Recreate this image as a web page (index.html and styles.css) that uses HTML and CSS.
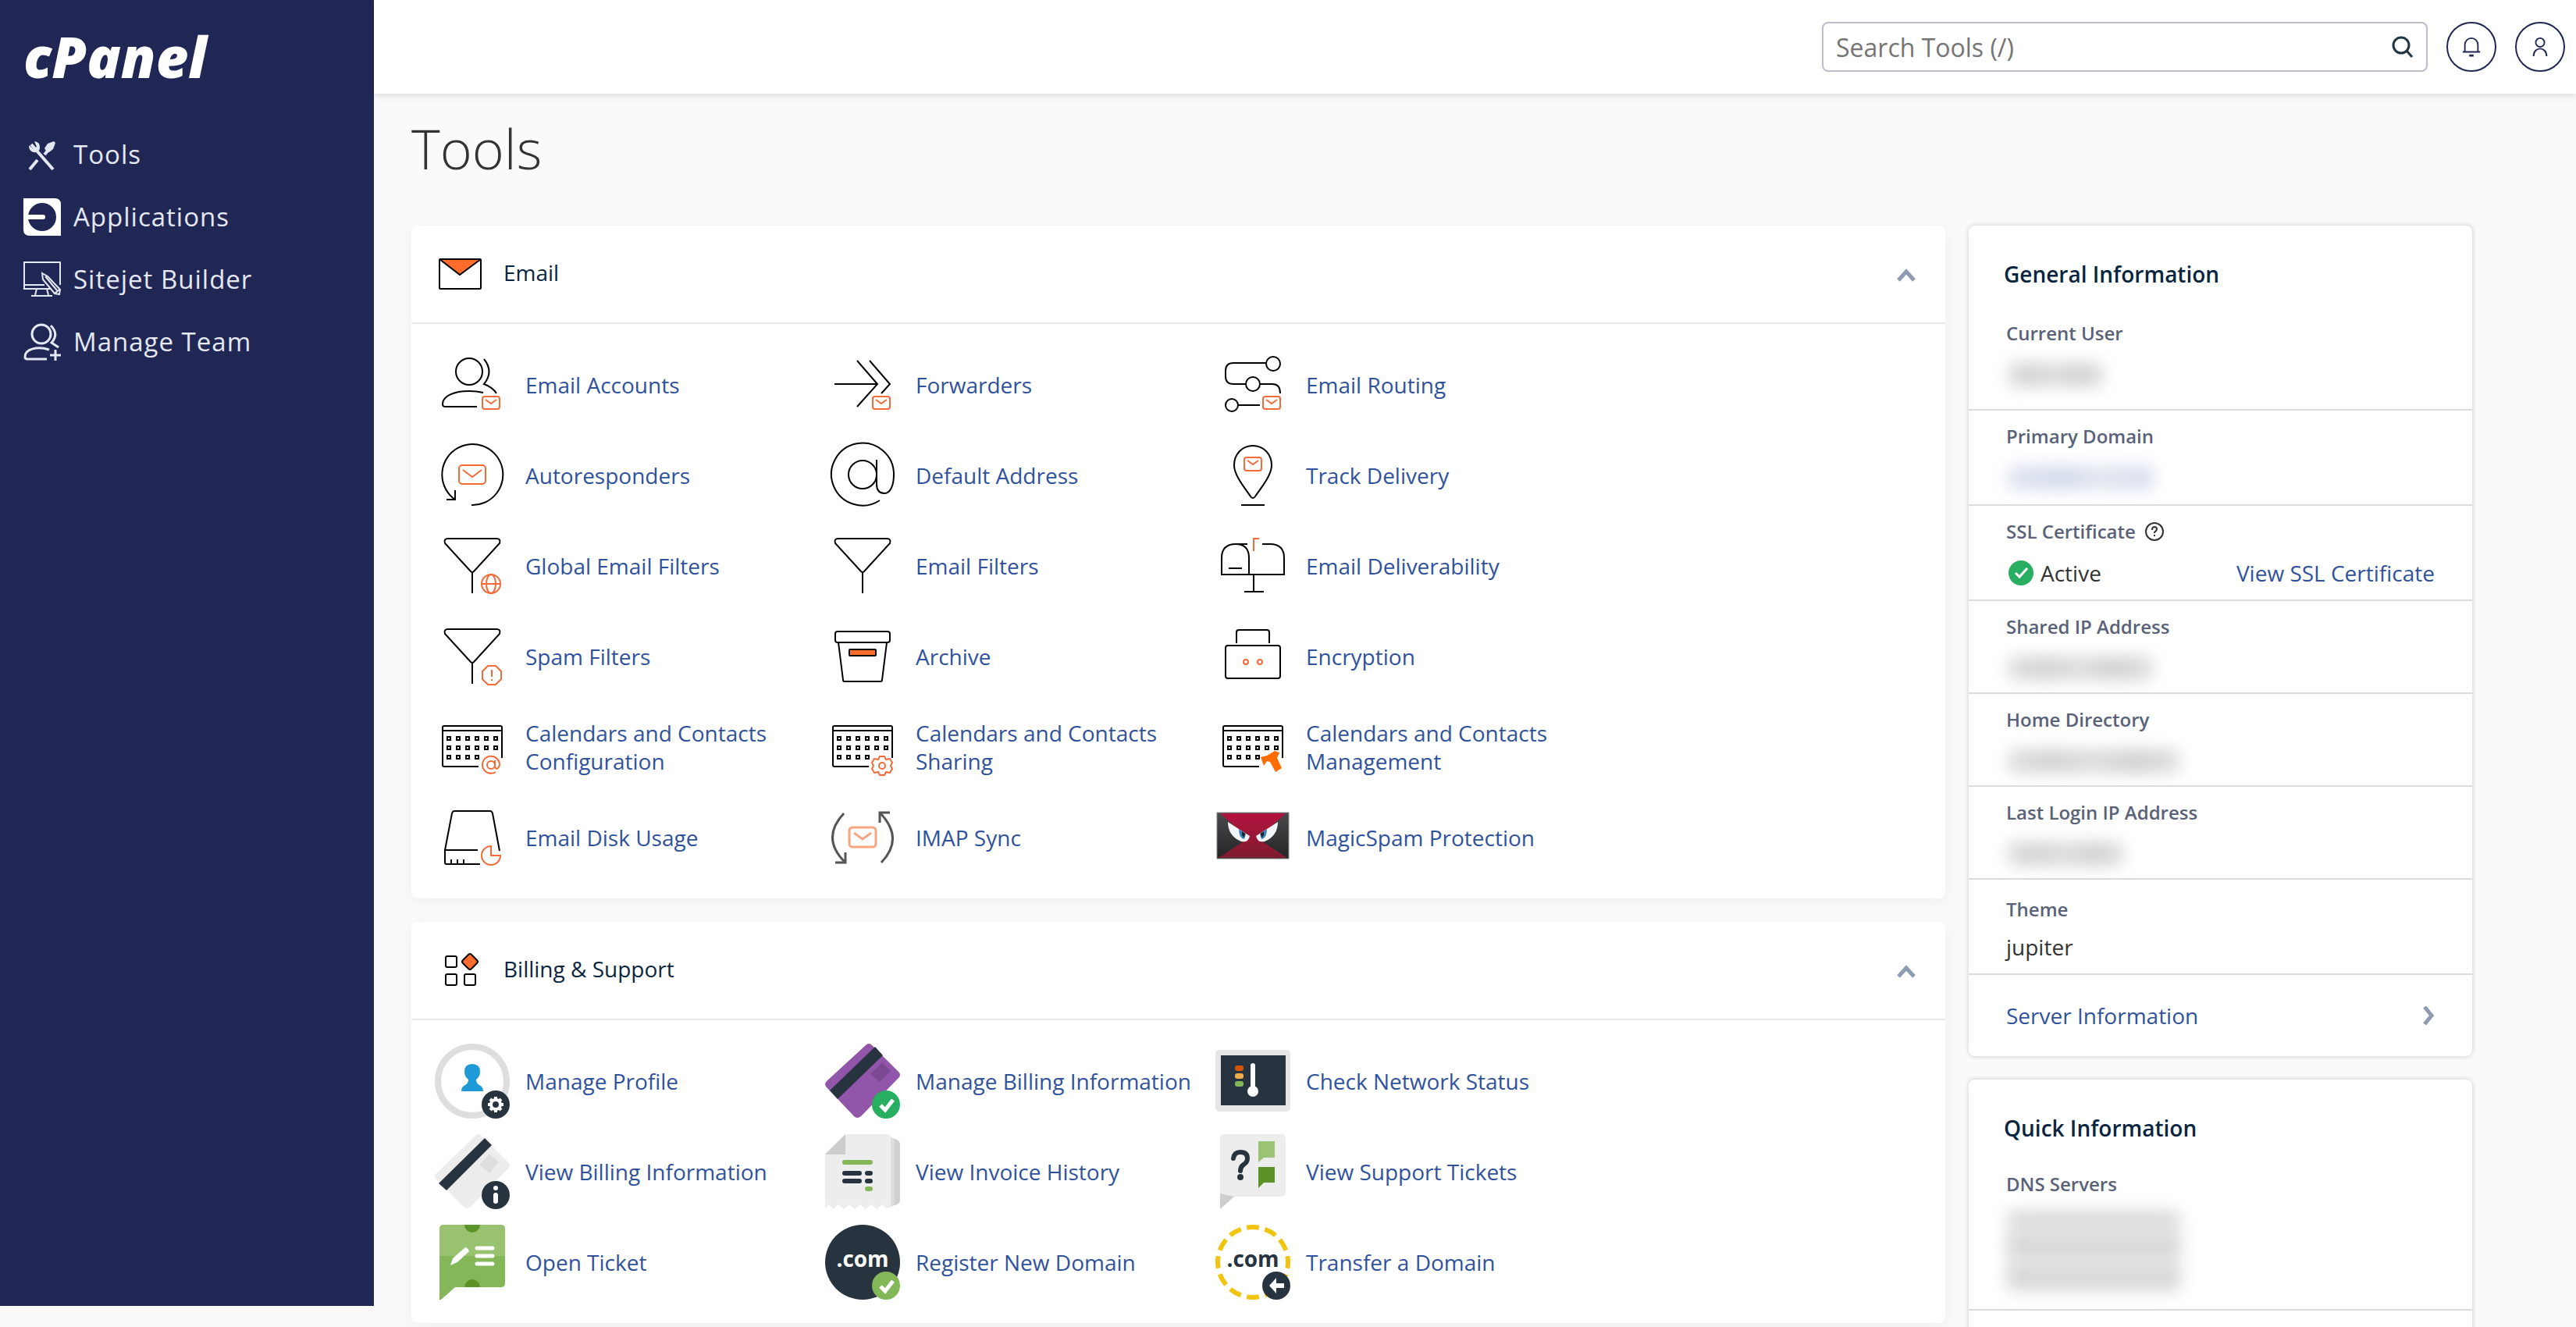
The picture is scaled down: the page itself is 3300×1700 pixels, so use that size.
FILE: index.html
```html
<!DOCTYPE html>
<html lang="en">
<head>
  <meta charset="UTF-8">
  <meta name="viewport" content="width=device-width, initial-scale=1.0">
  <title>cPanel - Tools</title>
  <link rel="stylesheet" href="styles.css">
</head>
<body>
  <!-- shared icon parts -->
  <svg class="defs" aria-hidden="true">
    <defs>
      <g id="mail-badge" class="accent">
        <rect x="61" y="63" width="22" height="16" rx="3"/>
        <path d="M65 67l7 5 7-5"/>
      </g>
      <g id="funnel" class="line">
        <path d="M17 13H79q6 0 4 6L50 55q-2 2-4 0L13 19q-2-6 4-6ZM48 57V83"/>
      </g>
      <g id="calendar" class="line">
        <path d="M56 73H12q-2 0-2-2V23q0-2 2-2H84q2 0 2 2V62M10 27H86"/>
        <path d="M16 35h4v4h-4zM28 35h4v4h-4zM40 35h4v4h-4zM52 35h4v4h-4zM64 35h4v4h-4zM76 35h4v4h-4zM16 47h4v4h-4zM28 47h4v4h-4zM40 47h4v4h-4zM52 47h4v4h-4zM64 47h4v4h-4zM76 47h4v4h-4zM16 59h4v4h-4zM28 59h4v4h-4zM40 59h4v4h-4zM52 59h4v4h-4z"/>
      </g>
      <path id="check" d="M71 79l6 6 10-13" fill="none" stroke="#fff" stroke-width="5"/>
    </defs>
  </svg>

  <div class="page">
    <nav class="sidebar">
      <a class="logo" href="#">cPanel</a>
      <a class="nav-link" href="#">
        <svg viewBox="0 0 48 48">
          <path d="M10 11L38 43M8 43L18 31M27 24L33 17" fill="none" stroke="#e4e8f2" stroke-width="4"/>
          <path d="M7 12l6 5 4-3-3-7q8 1 7 9-1 6-8 5-6-1-6-9ZM30 21l-3-5 4-6 8-3 2 2-3 8-5 4Z" fill="#e4e8f2"/>
        </svg>
        Tools
      </a>
      <a class="nav-link" href="#">
        <svg viewBox="0 0 48 48">
          <path d="M0 0H40q8 0 8 8V48H8q-8 0-8-8Z" fill="#fff"/>
          <circle cx="24" cy="24" r="18" fill="#212754"/>
          <path d="M5 24H25" stroke="#fff" stroke-width="6" stroke-linecap="round"/>
        </svg>
        Applications
      </a>
      <a class="nav-link" href="#">
        <svg viewBox="0 0 48 48" fill="none" stroke="#e4e8f2" stroke-width="2">
          <path d="M47 31V2H1V36H35M1 31H27M17 36l-2 8M30 36l2 8M10 45H37"/>
          <path d="M24 16l1 8 15 18 6 1 1-6-16-17ZM28 20L43 38M40 42l6-5"/>
        </svg>
        Sitejet Builder
      </a>
      <a class="nav-link" href="#">
        <svg viewBox="0 0 48 48" fill="none" stroke="#e4e8f2" stroke-width="3">
          <circle cx="23" cy="14" r="12"/>
          <path d="M35 3q11 11 1 22l9 6M33 34C18 29 2 33 2 43q0 3 3 3H30M41 34V48M34 41H48"/>
        </svg>
        Manage Team
      </a>
    </nav>

    <div class="main">
      <header class="topbar">
        <div class="search">
          <input type="search" id="search" placeholder="Search Tools (/)" aria-label="Search Tools">
          <button class="search-btn" aria-label="Search">
            <svg viewBox="0 0 28 28" fill="none" stroke="#233543" stroke-width="3"><circle cx="12" cy="12" r="10"/><path d="M19 19l7 8"/></svg>
          </button>
        </div>
        <button class="round-btn" aria-label="Notifications">
          <svg viewBox="0 0 28 28" fill="none" stroke="#212754" stroke-width="2"><path d="M5 21V11a9 9 0 0 1 18 0V21M2 21H26" /><path d="M11 26h6" stroke-width="3"/></svg>
        </button>
        <button class="round-btn" aria-label="Account">
          <svg viewBox="0 0 28 28" fill="none" stroke="#212754" stroke-width="2"><circle cx="14" cy="8" r="6"/><path d="M5 27c0-14 18-14 18 0"/></svg>
        </button>
      </header>

      <h1>Tools</h1>

      <div class="columns">
        <div class="tools">
          <section class="card">
            <div class="card-header">
              <svg class="head-icon" viewBox="0 0 64 48">
                <path d="M6 5H58L32 25Z" fill="#ff6c2c"/>
                <rect x="6" y="5" width="53" height="38" rx="1" fill="none" stroke="#000" stroke-width="2"/>
                <path d="M6 5L32 25 59 5" fill="none" stroke="#000" stroke-width="2"/>
              </svg>
              <h2>Email</h2>
              <button class="collapse" aria-label="Collapse Email"><svg viewBox="0 0 24 24"><path d="M2 18l10-11 10 11"/></svg></button>
            </div>
            <div class="card-body">
              <a class="tool" href="#">
                <svg viewBox="0 0 96 96">
                  <g class="line"><circle cx="44" cy="31" r="17"/><path d="M63 15Q76 31 63 47q11 4 16 12M62 58q-8-2-18-2C25 56 10 62 10 73q0 3 4 3H54"/></g>
                  <use href="#mail-badge"/>
                </svg>
                <span>Email Accounts</span>
              </a>
              <a class="tool" href="#">
                <svg viewBox="0 0 96 96">
                  <path class="line" d="M12 47H67M41 17L67 47 41 76M57 17L83 47 72 59"/>
                  <use href="#mail-badge"/>
                </svg>
                <span>Forwarders</span>
              </a>
              <a class="tool" href="#">
                <svg viewBox="0 0 96 96">
                  <g class="line"><circle cx="74" cy="21" r="9"/><circle cx="48" cy="47" r="9"/><circle cx="21" cy="74" r="8"/><path d="M65 20H23q-10 0-10 10v7q0 10 10 10H39M57 47H73q10 0 10 12M29 74H57"/></g>
                  <use href="#mail-badge"/>
                </svg>
                <span>Email Routing</span>
              </a>
              <a class="tool" href="#">
                <svg viewBox="0 0 96 96">
                  <path class="line" d="M47 86A39 39 0 1 0 26 79M26 67V79H15"/>
                  <g class="accent"><rect x="31" y="35" width="34" height="24" rx="4"/><path d="M36 41l12 9 12-9"/></g>
                </svg>
                <span>Autoresponders</span>
              </a>
              <a class="tool" href="#">
                <svg viewBox="0 0 96 96">
                  <g class="line"><circle cx="48" cy="47" r="18"/><path d="M66 28V59q0 12 10 12C84 71 88 60 88 47A40 40 0 1 0 70 80"/></g>
                </svg>
                <span>Default Address</span>
              </a>
              <a class="tool" href="#">
                <svg viewBox="0 0 96 96">
                  <path class="line" d="M48 10C34 10 24 21 24 35C24 49 40 67 45 75q3 4 6 0C56 67 72 49 72 35C72 21 62 10 48 10ZM33 86H63"/>
                  <g class="accent"><rect x="37" y="25" width="22" height="17" rx="3"/><path d="M41 29l7 5 7-5"/></g>
                </svg>
                <span>Track Delivery</span>
              </a>
              <a class="tool" href="#">
                <svg viewBox="0 0 96 96">
                  <use href="#funnel"/>
                  <g class="accent"><circle cx="72" cy="71" r="12"/><ellipse cx="72" cy="71" rx="6" ry="12"/><path d="M60 71H84"/></g>
                </svg>
                <span>Global Email Filters</span>
              </a>
              <a class="tool" href="#">
                <svg viewBox="0 0 96 96"><use href="#funnel"/></svg>
                <span>Email Filters</span>
              </a>
              <a class="tool" href="#">
                <svg viewBox="0 0 96 96">
                  <path class="line" d="M41 20H26Q8 20 8 38V59H88V38Q88 20 70 20H60M26 20Q43 20 43 38V59M49 59V81M37 81H62M17 51H34"/>
                  <path class="accent" d="M49 29V13H56"/>
                </svg>
                <span>Email Deliverability</span>
              </a>
              <a class="tool" href="#">
                <svg viewBox="0 0 96 96">
                  <use href="#funnel"/>
                  <path class="accent" d="M68 60H78L85 67V77L78 84H68L61 77V67ZM73 65V74M73 77V79"/>
                </svg>
                <span>Spam Filters</span>
              </a>
              <a class="tool" href="#">
                <svg viewBox="0 0 96 96">
                  <g class="line"><rect x="13" y="16" width="70" height="14" rx="3"/><path d="M17 30L23 78q0 2 2 2H71q2 0 2-2L79 30"/><rect x="31" y="39" width="34" height="8" rx="1" class="filled"/></g>
                </svg>
                <span>Archive</span>
              </a>
              <a class="tool" href="#">
                <svg viewBox="0 0 96 96">
                  <g class="line"><rect x="13" y="34" width="70" height="42" rx="3"/><path d="M27 31V17q0-3 3-3H66q3 0 3 3V31"/></g>
                  <g class="accent"><circle cx="39" cy="55" r="3"/><circle cx="57" cy="55" r="3"/></g>
                </svg>
                <span>Encryption</span>
              </a>
              <a class="tool" href="#">
                <svg viewBox="0 0 96 96">
                  <use href="#calendar"/>
                  <g class="accent"><circle cx="72" cy="71" r="5"/><path d="M77 65V73q1 4 4 2 2-2 2-5A11 11 0 1 0 78 80"/></g>
                </svg>
                <span>Calendars and Contacts Configuration</span>
              </a>
              <a class="tool" href="#">
                <svg viewBox="0 0 96 96">
                  <use href="#calendar"/>
                  <g class="accent"><circle cx="73" cy="72" r="4"/><path d="M70 60h6l2 4 5-1 3 5-2 4 2 4-3 5-5-1-2 4h-6l-2-4-5 1-3-5 2-4-2-4 3-5 5 1Z"/></g>
                </svg>
                <span>Calendars and Contacts Sharing</span>
              </a>
              <a class="tool" href="#">
                <svg viewBox="0 0 96 96">
                  <use href="#calendar"/>
                  <path d="M58 61L66 59 76 53 82 55 79 62 85 75 77 80 70 67 66 66 62 72Z" fill="#ff6c00"/>
                </svg>
                <span>Calendars and Contacts Management</span>
              </a>
              <a class="tool" href="#">
                <svg viewBox="0 0 96 96">
                  <path class="line" d="M55 64H13V80q0 2 2 2H58M13 64L22 17q1-3 3-3H71q2 0 3 3L83 65M21 76V82M29 76V82M37 76V82"/>
                  <path class="accent" d="M72 59A12 12 0 1 0 84 71H72Z"/>
                </svg>
                <span>Email Disk Usage</span>
              </a>
              <a class="tool" href="#">
                <svg viewBox="0 0 96 96">
                  <path d="M24 17Q-6 49 26 80M26 67V80H13M72 80Q102 49 70 16M70 29V16H83" fill="none" stroke="#555" stroke-width="3"/>
                  <g fill="none" stroke="#f9a582" stroke-width="3"><rect x="31" y="35" width="34" height="25" rx="4"/><path d="M37 42l11 8 11-8"/></g>
                </svg>
                <span>IMAP Sync</span>
              </a>
              <a class="tool" href="#">
                <svg viewBox="0 0 96 96">
                  <defs>
                    <linearGradient id="mask" x1="0" y1="0" x2="0" y2="1"><stop offset="0" stop-color="#b5123f"/><stop offset="1" stop-color="#7d1c2e"/></linearGradient>
                    <linearGradient id="hood" x1="0" y1="0" x2="0" y2="1"><stop offset="0" stop-color="#4a4a4c"/><stop offset="1" stop-color="#242426"/></linearGradient>
                  </defs>
                  <rect x="2" y="16" width="92" height="59" fill="url(#hood)" stroke="#888"/>
                  <path d="M6 17H90L54 49 92 74H4L42 49Z" fill="url(#mask)"/>
                  <path d="M16 28L44 46Q42 55 33 53Q16 46 16 28ZM80 28L52 46Q54 55 63 53Q80 46 80 28Z" fill="#f2f5f7"/>
                  <path d="M30 37l9 6-2 7q-7-1-7-13ZM66 37l-9 6 2 7q7-1 7-13Z" fill="#3b82b8"/>
                  <path d="M34 40l4 3-1 5-3-3ZM62 40l-4 3 1 5 3-3Z" fill="#14212e"/>
                </svg>
                <span>MagicSpam Protection</span>
              </a>
            </div>
          </section>

          <section class="card">
            <div class="card-header">
              <svg class="head-icon" viewBox="0 0 64 48" fill="none" stroke="#000" stroke-width="2">
                <rect x="14" y="6" width="14" height="14" rx="2"/>
                <rect x="14" y="29" width="14" height="14" rx="2"/>
                <rect x="38" y="29" width="14" height="14" rx="2"/>
                <path d="M43 4q2-2 4 0l7 7q2 2 0 4l-7 7q-2 2-4 0l-7-7q-2-2 0-4Z" fill="#ff6c2c"/>
              </svg>
              <h2>Billing &amp; Support</h2>
              <button class="collapse" aria-label="Collapse Billing &amp; Support"><svg viewBox="0 0 24 24"><path d="M2 18l10-11 10 11"/></svg></button>
            </div>
            <div class="card-body">
              <a class="tool" href="#">
                <svg viewBox="0 0 96 96">
                  <circle cx="48" cy="48" r="44" fill="#fff" stroke="#dedede" stroke-width="8"/>
                  <path d="M48 26q10 0 10 10 0 6-5 10 0 5 4 7 5 2 5 8H34q0-6 5-8 4-2 4-7-5-4-5-10 0-10 10-10Z" fill="#1e9ad6"/>
                  <circle cx="78" cy="78" r="18" fill="#27333f"/>
                  <circle cx="78" cy="78" r="6" fill="none" stroke="#fff" stroke-width="4"/>
                  <path d="M78 68V72M78 84V88M68 78H72M84 78H88M71 71l3 3M82 82l3 3M71 85l3-3M82 74l3-3" stroke="#fff" stroke-width="4"/>
                </svg>
                <span>Manage Profile</span>
              </a>
              <a class="tool" href="#">
                <svg viewBox="0 0 96 96">
                  <path d="M52 2q4-4 8 0L94 36q4 4 0 8L46 93q-5 4-9 0L2 56q-4-4 0-8Z" fill="#9155a9"/>
                  <path d="M64 4L74 15 16 71 6 60Z" fill="#27333f"/>
                  <path d="M73 24L84 35 70 49 58 39Z" fill="#7b4892"/>
                  <circle cx="78" cy="78" r="18" fill="#27ae60"/>
                  <use href="#check"/>
                </svg>
                <span>Manage Billing Information</span>
              </a>
              <a class="tool" href="#">
                <svg viewBox="0 0 96 96">
                  <rect x="0" y="8" width="96" height="79" rx="5" fill="#e6e6e6"/>
                  <rect x="7" y="15" width="83" height="64" fill="#27333f"/>
                  <rect x="25" y="28" width="11" height="7" rx="3" fill="#d35400"/>
                  <rect x="25" y="38" width="11" height="7" rx="3" fill="#f0ad4e"/>
                  <rect x="25" y="48" width="11" height="7" rx="3" fill="#84b758"/>
                  <path d="M48 28V58" stroke="#fff" stroke-width="6" stroke-linecap="round"/>
                  <circle cx="48" cy="61" r="7" fill="#fff"/>
                </svg>
                <span>Check Network Status</span>
              </a>
              <a class="tool" href="#">
                <svg viewBox="0 0 96 96">
                  <path d="M52 2q4-4 8 0L94 36q4 4 0 8L46 93q-5 4-9 0L2 58q-4-4 0-8Z" fill="#ededed"/>
                  <path d="M64 5L73 14 15 72 5 63Z" fill="#27333f"/>
                  <path d="M70 25L82 36 70 50 57 39Z" fill="#dedede"/>
                  <circle cx="78" cy="78" r="18" fill="#27333f"/>
                  <path d="M78 78V86" stroke="#fff" stroke-width="6" stroke-linecap="round"/>
                  <circle cx="78" cy="69" r="3" fill="#fff"/>
                </svg>
                <span>View Billing Information</span>
              </a>
              <a class="tool" href="#">
                <svg viewBox="0 0 96 96">
                  <path d="M80 5q16 0 16 8V84q0 8-16 8Z" fill="#d0d0d0"/>
                  <path d="M80 3q9 0 9 8V86q0 7-9 8Z" fill="#dedede"/>
                  <path d="M26 0H80q4 0 4 4V93l-6 2-5-5-7 6-7-6-7 6-7-6-7 6-7-6-7 6-7-6-7 6-5-6-5 5-2-1V26Z" fill="#ededed"/>
                  <path d="M26 0V26H0Z" fill="#cdcdcd"/>
                  <path d="M25 36H58M54 70h4" stroke="#84b758" stroke-width="6" stroke-linecap="round"/>
                  <path d="M25 50H44M25 60H44M54 50h4M54 60h4" stroke="#27333f" stroke-width="6" stroke-linecap="round"/>
                </svg>
                <span>View Invoice History</span>
              </a>
              <a class="tool" href="#">
                <svg viewBox="0 0 96 96">
                  <rect x="6" y="0" width="84" height="80" rx="5" fill="#ededed"/>
                  <path d="M6 76V96L24 80Z" fill="#cdcdcd"/>
                  <path d="M23 31q1-8 9-8 9 0 9 8 0 5-5 8-4 3-4 8" fill="none" stroke="#27333f" stroke-width="6" stroke-linecap="round"/>
                  <circle cx="32" cy="55" r="4" fill="#27333f"/>
                  <path d="M55 9H76V30H62L55 36Z" fill="#9ac373"/>
                  <path d="M55 42H76V62H62L55 69Z" fill="#5b9328"/>
                </svg>
                <span>View Support Tickets</span>
              </a>
              <a class="tool" href="#">
                <svg viewBox="0 0 96 96">
                  <path d="M6 40H90V75q0 5-5 5H26L8 96H6Z" fill="#84b758"/>
                  <path d="M6 40V5q0-5 5-5H85q5 0 5 5V40Z" fill="#98c270"/>
                  <path d="M38 0a10 10 0 0 0 20 0ZM38 80a10 10 0 0 1 20 0Z" fill="#5b9328"/>
                  <path d="M20 52l3-9 16-14q4 1 5 5L29 48Z" fill="#fff"/>
                  <path d="M54 30H74M54 40H74M54 50H74" stroke="#fff" stroke-width="5" stroke-linecap="round"/>
                </svg>
                <span>Open Ticket</span>
              </a>
              <a class="tool" href="#">
                <svg viewBox="0 0 96 96">
                  <circle cx="48" cy="48" r="48" fill="#27333f"/>
                  <text x="48" y="54" class="tld" fill="#fff">.com</text>
                  <circle cx="78" cy="78" r="18" fill="#84b758"/>
                  <use href="#check"/>
                </svg>
                <span>Register New Domain</span>
              </a>
              <a class="tool" href="#">
                <svg viewBox="0 0 96 96">
                  <circle cx="48" cy="48" r="45" fill="none" stroke="#f1c40f" stroke-width="6" pathLength="288" stroke-dasharray="16 8" stroke-dashoffset="8"/>
                  <text x="48" y="54" class="tld" fill="#27333f">.com</text>
                  <circle cx="78" cy="78" r="18" fill="#27333f"/>
                  <path d="M69 78l9-10v7h10v6H78v7Z" fill="#fff"/>
                </svg>
                <span>Transfer a Domain</span>
              </a>
            </div>
          </section>
        </div>

        <aside class="side">
          <section class="info">
            <h3>General Information</h3>
            <div class="info-row first">
              <div class="label">Current User</div>
              <div class="value"><span class="redacted w-sm"></span></div>
            </div>
            <div class="info-row">
              <div class="label">Primary Domain</div>
              <div class="value"><span class="redacted blue w-lg"></span></div>
            </div>
            <div class="info-row">
              <div class="label">SSL Certificate
                <svg class="help" viewBox="0 0 24 24" fill="none" stroke="#333" stroke-width="2"><circle cx="12" cy="12" r="11"/><path d="M9 10q0-4 3-4 3 0 3 3 0 1-3 4v1M12 16v2"/></svg>
              </div>
              <div class="value">
                <svg class="ok" viewBox="0 0 32 32"><circle cx="16" cy="16" r="16" fill="#27ae60"/><path d="M9 16l5 5 10-11" fill="none" stroke="#fff" stroke-width="3"/></svg>
                Active
                <a class="push" href="#">View SSL Certificate</a>
              </div>
            </div>
            <div class="info-row compact">
              <div class="label">Shared IP Address</div>
              <div class="value"><span class="redacted w-lg"></span></div>
            </div>
            <div class="info-row compact">
              <div class="label">Home Directory</div>
              <div class="value"><span class="redacted w-xl"></span></div>
            </div>
            <div class="info-row compact">
              <div class="label">Last Login IP Address</div>
              <div class="value"><span class="redacted w-md"></span></div>
            </div>
            <div class="info-row theme">
              <div class="label">Theme</div>
              <div class="value">jupiter</div>
            </div>
            <a class="server-link" href="#">
              Server Information
              <svg viewBox="0 0 24 24"><path d="M7 1l9 11-9 11"/></svg>
            </a>
          </section>

          <section class="info">
            <h3>Quick Information</h3>
            <div class="info-row dns">
              <div class="label">DNS Servers</div>
              <div class="value"><span class="redacted block w-xl"></span></div>
            </div>
            <div class="info-row"></div>
          </section>
        </aside>
      </div>
    </div>
  </div>
</body>
</html>
```
FILE: styles.css
```css
* {
  box-sizing: border-box;
}
body {
  margin: 0;
  background: #fafafa;
  color: #333;
  font-family: "Open Sans", "Noto Sans", sans-serif;
  font-size: 28px;
  line-height: 36px;
}
a {
  color: #2f529b;
  text-decoration: none;
}
button {
  padding: 0;
  border: none;
  background: none;
  cursor: pointer;
}
svg {
  display: block;
  flex: none;
}
.defs {
  position: absolute;
  width: 0;
  height: 0;
}
.page {
  display: flex;
  align-items: flex-start;
  height: 100vh;
  overflow: hidden;
}

/* sidebar */
.sidebar {
  width: 479px;
  height: calc(100vh - 27px);
  padding: 36px 30px;
  background: #212754;
  flex: none;
}
.logo {
  display: block;
  margin-bottom: 50px;
  color: #fff;
  font-size: 72px;
  font-style: italic;
  font-weight: 800;
  line-height: 72px;
}
.nav-link {
  display: flex;
  align-items: center;
  gap: 16px;
  height: 80px;
  color: #e4e8f2;
  font-size: 33px;
  letter-spacing: 1px;
}
.nav-link svg {
  width: 48px;
  height: 48px;
}

/* top bar */
.main {
  flex: 1;
  min-width: 0;
}
.topbar {
  display: flex;
  justify-content: flex-end;
  align-items: center;
  gap: 24px;
  height: 120px;
  padding: 0 14px;
  background: #fff;
  box-shadow: 0 2px 8px rgba(0, 0, 0, 0.14);
}
.search {
  display: flex;
  align-items: center;
  width: 776px;
  height: 64px;
  padding: 0 16px;
  border: 2px solid #bcbccb;
  border-radius: 8px;
}
.search input {
  flex: 1;
  min-width: 0;
  padding: 0;
  border: none;
  outline: none;
  background: none;
  font-family: inherit;
  font-size: 32px;
}
.search input::placeholder {
  color: #757575;
}
.search-btn svg {
  width: 28px;
  height: 28px;
}
.round-btn {
  display: flex;
  align-items: center;
  justify-content: center;
  width: 64px;
  height: 64px;
  border: 2px solid #212754;
  border-radius: 50%;
}
.round-btn svg {
  width: 26px;
  height: 26px;
}

h1 {
  margin: 0;
  padding: 20px 48px 49px;
  font-size: 70px;
  font-weight: 300;
  line-height: 100px;
}
.columns {
  display: flex;
  align-items: flex-start;
  gap: 30px;
  padding: 0 133px 0 48px;
}
.tools {
  display: flex;
  flex: 1;
  flex-direction: column;
  gap: 30px;
}
.card {
  background: #fff;
  border-radius: 8px;
  box-shadow: 0 4px 20px rgba(0, 0, 0, 0.05);
}
.card-header {
  display: flex;
  align-items: center;
  gap: 24px;
  height: 126px;
  padding: 0 38px 0 30px;
  border-bottom: 2px solid #e6e8ec;
}
.card-header h2 {
  flex: 1;
  margin: 0;
  padding-bottom: 4px;
  color: #0a2540;
  font-size: 28px;
  font-weight: 400;
}
.head-icon {
  width: 64px;
  height: 48px;
}
.collapse {
  padding-top: 4px;
}
.collapse svg,
.server-link svg {
  width: 24px;
  height: 24px;
  fill: none;
  stroke: #8f9bb3;
  stroke-width: 5;
}
.card-body {
  display: grid;
  grid-template-columns: repeat(auto-fill, 500px);
  gap: 20px 0;
  padding: 30px;
}
.tool {
  display: flex;
  align-items: center;
  gap: 20px;
  padding-right: 24px;
}
.tool svg {
  width: 96px;
  height: 96px;
}
.line {
  fill: none;
  stroke: #000;
  stroke-width: 2;
}
.filled {
  fill: #ff6c2c;
}
.accent {
  fill: none;
  stroke: #f26b38;
  stroke-width: 2;
}
.tld {
  font-size: 28px;
  font-weight: 700;
  text-anchor: middle;
}

/* information column */
.side {
  display: flex;
  flex-direction: column;
  gap: 30px;
  width: 645px;
}
.info {
  background: #fff;
  border-radius: 8px;
  box-shadow: 0 0 6px rgba(0, 0, 0, 0.2);
}
.info h3 {
  margin: 0;
  padding: 44px 45px 20px;
  color: #0a2540;
  font-size: 28px;
  font-weight: 600;
}
.info-row {
  padding: 17px 48px 15px;
  border-bottom: 2px solid #dcdcdc;
}
.label {
  display: flex;
  align-items: center;
  gap: 12px;
  margin-bottom: 18px;
  color: #596278;
  font-size: 24px;
  font-weight: 600;
  line-height: 32px;
}
.help {
  width: 24px;
  height: 24px;
}
.value {
  display: flex;
  align-items: center;
  gap: 9px;
  line-height: 38px;
  min-height: 38px;
}
.ok {
  width: 32px;
  height: 32px;
  margin-left: 3px;
}
.push {
  margin-left: auto;
}
.first {
  padding: 22px 48px 25px;
}
.compact {
  padding-bottom: 12px;
}
.theme {
  padding-top: 22px;
}
.theme .label {
  margin-bottom: 13px;
}
.dns {
  padding: 18px 48px 20px;
}
.redacted {
  height: 32px;
  background: linear-gradient(90deg, #e2e2e2, #d3d3d3 25%, #dedede 50%, #d1d1d1 75%, #e2e2e2);
  border-radius: 12px;
  filter: blur(10px);
}
.blue {
  background: linear-gradient(90deg, #e0e5f1, #d3daea 40%, #e2e6f1 60%, #d8deed);
}
.block {
  height: 106px;
  background: repeating-linear-gradient(180deg, #d6d6d6 0, #d6d6d6 12px, #ebebeb 24px, #d6d6d6 40px);
}
.w-sm {
  width: 126px;
}
.w-md {
  width: 152px;
}
.w-lg {
  width: 190px;
}
.w-xl {
  width: 224px;
}
.server-link {
  display: flex;
  align-items: center;
  justify-content: space-between;
  height: 104px;
  padding: 0 44px 0 48px;
}
```
